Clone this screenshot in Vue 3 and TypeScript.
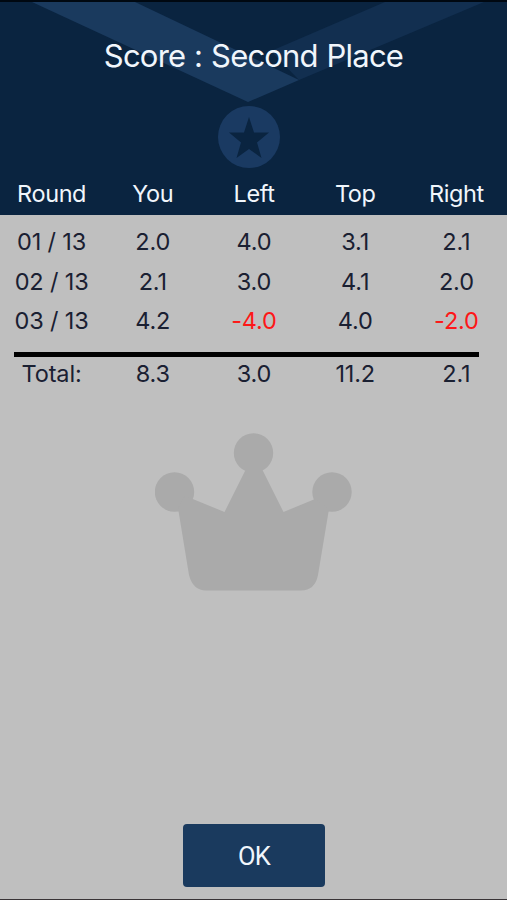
<script setup lang="ts">
interface Row {
  label: string
  scores: string[]
}

const players: string[] = ['You', 'Left', 'Top', 'Right']

const rounds: Row[] = [
  { label: '01 / 13', scores: ['2.0', '4.0', '3.1', '2.1'] },
  { label: '02 / 13', scores: ['2.1', '3.0', '4.1', '2.0'] },
  { label: '03 / 13', scores: ['4.2', '-4.0', '4.0', '-2.0'] },
]

const total: Row = { label: 'Total:', scores: ['8.3', '3.0', '11.2', '2.1'] }

const isNegative = (score: string): boolean => score.startsWith('-')
</script>

<template>
  <main class="screen">
    <header class="header">
      <svg class="medal" viewBox="0 0 507 213" aria-hidden="true">
        <path d="M385 0H484L299 78L271 49Z" fill="#122f50" />
        <path d="M32 0H135L299 78L248 100Z" fill="#1a3a5e" />
        <circle cx="249" cy="135" r="31" fill="#1a3a62" />
        <path
          d="M249 115L254 130.500H269L257 140.500L261.500 156L249 147L236.500 156L241 140.500L229 130.500H244Z"
          fill="#0a2440"
        />
      </svg>
      <h1 class="title">Score : Second Place</h1>
      <div class="row heads">
        <span>Round</span>
        <span v-for="player in players" :key="player">{{ player }}</span>
      </div>
    </header>

    <section class="scores">
      <div v-for="round in rounds" :key="round.label" class="row">
        <span>{{ round.label }}</span>
        <span
          v-for="(score, i) in round.scores"
          :key="i"
          :class="{ negative: isNegative(score) }"
        >{{ score }}</span>
      </div>
      <div class="rule"></div>
      <div class="row total">
        <span>{{ total.label }}</span>
        <span v-for="(score, i) in total.scores" :key="i">{{ score }}</span>
      </div>
    </section>

    <svg class="crown" viewBox="0 0 198 158" aria-hidden="true">
      <circle cx="19.500" cy="59" r="19.700" />
      <circle cx="98.500" cy="20" r="19.700" />
      <circle cx="177" cy="59" r="19.700" />
      <path d="M23 75L30 63L39 66.500L69.500 79L91 36H107L128.500 79L160 66L174 76L163 142Q160 157.500 146 157.500H51Q38 157.500 34 142Z" />
    </svg>

    <footer class="footer">
      <button class="ok" type="button">OK</button>
    </footer>
  </main>
</template>

<style>
body {
  margin: 0;
}
</style>

<style scoped>
.screen {
  box-sizing: border-box;
  display: flex;
  flex-direction: column;
  width: 507px;
  height: 900px;
  border-top: 2px solid #000811;
  border-bottom: 1px solid #393437;
  background: #bfbfbf;
  color: #1a2032;
  font-family: Inter, "Liberation Sans", sans-serif;
  overflow: hidden;
}

.header {
  position: relative;
  display: flex;
  flex-direction: column;
  justify-content: space-between;
  flex: none;
  height: 213px;
  background: #0a2440;
  color: #f1f6fc;
}

.medal {
  position: absolute;
  inset: 0;
  width: 507px;
  height: 213px;
}

.title {
  position: relative;
  margin: 34px 0 0;
  font-size: 31px;
  font-weight: 400;
  line-height: 40px;
  letter-spacing: -0.8px;
  word-spacing: 0.9px;
  text-align: center;
}

.row {
  display: grid;
  grid-template-columns: repeat(5, 1fr);
  height: 39.5px;
  padding-left: 1px;
  font-size: 23.5px;
  line-height: 39.5px;
  letter-spacing: -0.15px;
  text-align: center;
  white-space: nowrap;
}

.heads {
  position: relative;
  height: 42px;
  line-height: 41px;
  letter-spacing: -0.4px;
}

.scores {
  flex: none;
  padding-top: 7px;
}

.negative {
  color: #fd1718;
}

.rule {
  width: 465px;
  height: 5px;
  margin: 11.5px 0 0 13.5px;
  background: #000;
}

.total {
  height: 34px;
  line-height: 33px;
}

.crown {
  flex: none;
  align-self: flex-start;
  width: 198px;
  height: 158px;
  margin: 42px 0 0 155px;
  fill: #aaa;
}

.footer {
  display: flex;
  justify-content: center;
  margin-top: auto;
  padding: 0 0 12.5px 1px;
}

.ok {
  width: 142px;
  height: 63px;
  padding: 2px 0 0;
  border: 0;
  border-radius: 4px;
  background: #1a3a5e;
  color: #f1f6fc;
  font-family: Roboto, "Liberation Sans", sans-serif;
  font-size: 25.5px;
  letter-spacing: -0.8px;
}
</style>
